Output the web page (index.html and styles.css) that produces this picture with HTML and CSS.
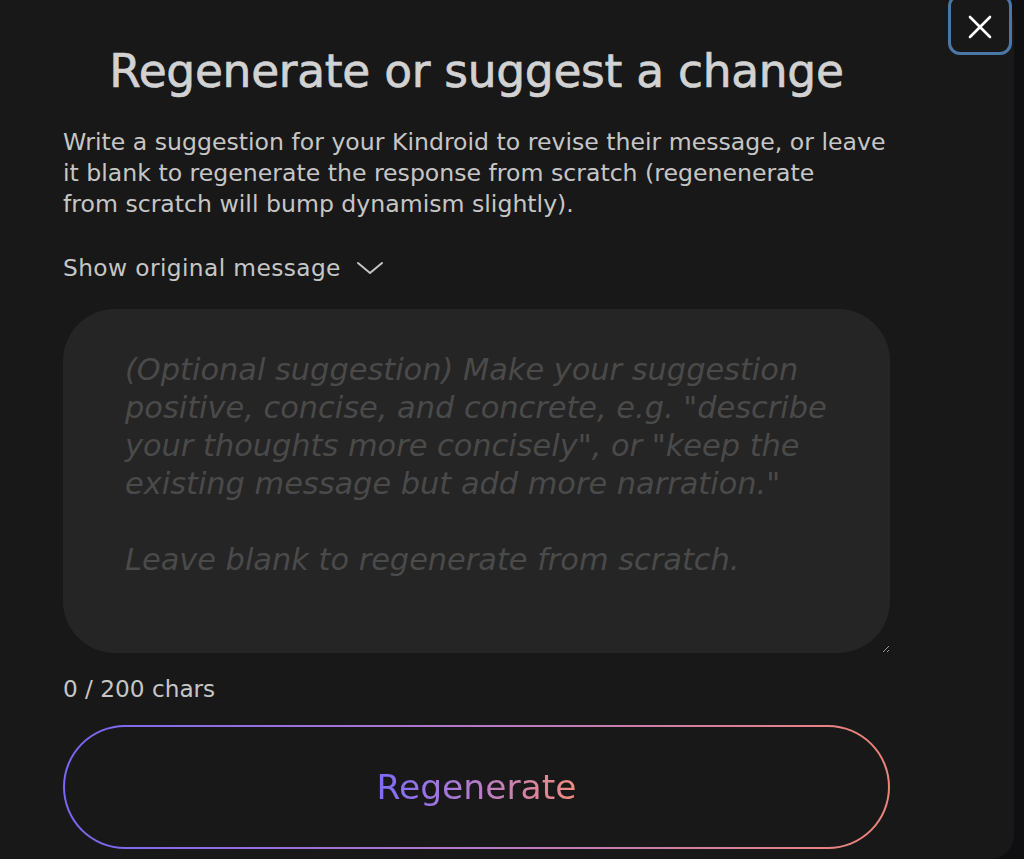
FILE: index.html
```html
<!DOCTYPE html>
<html lang="en">
<head>
    <meta charset="UTF-8">
    <meta name="viewport" content="width=device-width, initial-scale=1.0">
    <title>Regenerate</title>
    <link rel="stylesheet" href="styles.css">
</head>
<body>
    <div class="modal">
        <button class="close" aria-label="Close">
            <svg width="24" height="24" viewBox="0 0 24 24">
                <path d="M2 2 L22 22 M22 2 L2 22" stroke="#fff" stroke-width="2.6" stroke-linecap="round"/>
            </svg>
        </button>

        <div class="content">
            <h1 class="title">Regenerate or suggest a change</h1>
            <p class="desc">Write a suggestion for your Kindroid to revise their message, or leave it blank to regenerate the response from scratch (regenenerate<br>from scratch will bump dynamism slightly).</p>

            <div class="toggle">
                Show original message
                <svg width="28" height="16" viewBox="0 0 28 16">
                    <path d="M2 3 L14 13 L26 3" fill="none" stroke="#c4c4c4" stroke-width="2" stroke-linecap="round" stroke-linejoin="round"/>
                </svg>
            </div>

            <textarea class="suggestion" placeholder="(Optional suggestion) Make your suggestion positive, concise, and concrete, e.g. &quot;describe your thoughts more concisely&quot;, or &quot;keep the existing message but add more narration.&quot;&#10;&#10;Leave blank to regenerate from scratch."></textarea>

            <div class="count">0 / 200 chars</div>

            <button class="regen"><span>Regenerate</span></button>
        </div>
    </div>
</body>
</html>
```

FILE: styles.css
```css
body {
    margin: 0;
    height: 100vh;
    background-color: #0f0f11;
    font-family: "DejaVu Sans", sans-serif;
    overflow: hidden;
}

.modal {
    position: relative;
    height: 100%;
    margin-right: 10px;
    background-color: #181818;
    border-radius: 0 24px 24px 0;
}

.close {
    position: absolute;
    top: -6px;
    right: 2px;
    width: 64px;
    height: 61px;
    border: 3px solid #4b77a6;
    border-radius: 12px;
    background-color: #181818;
    display: flex;
    align-items: center;
    justify-content: center;
    padding: 0;
    padding-top: 5px;
    cursor: pointer;
}

.content {
    width: 827px;
    padding-left: 63px;
    padding-top: 44px;
}

.title {
    margin: 0;
    text-align: center;
    font-size: 45.5px;
    font-weight: 500;
    line-height: 56px;
    color: #d2d2d2;
    letter-spacing: -0.3px;
    -webkit-text-stroke: 0.7px #d2d2d2;
}

.desc {
    margin: 27px 0 0;
    font-size: 23.6px;
    line-height: 31px;
    color: #c6c6c6;
}

.toggle {
    display: flex;
    align-items: center;
    gap: 15px;
    margin-top: 32px;
    font-size: 23.3px;
    letter-spacing: 0.4px;
    line-height: 31px;
    color: #c6c6c6;
}

.suggestion {
    display: block;
    box-sizing: border-box;
    width: 100%;
    height: 344px;
    margin-top: 26px;
    padding: 42px 50px 20px 62px;
    border: none;
    border-radius: 52px;
    background-color: #252525;
    font-family: "DejaVu Sans", sans-serif;
    font-style: italic;
    font-size: 30.4px;
    line-height: 38px;
    color: #ddd;
    outline: none;
}

.suggestion::placeholder {
    color: #4a4a4a;
}

.count {
    margin-top: 20px;
    font-size: 23.2px;
    line-height: 31px;
    color: #c6c6c6;
}

.regen {
    display: flex;
    align-items: center;
    justify-content: center;
    box-sizing: border-box;
    width: 100%;
    height: 124px;
    margin-top: 21px;
    border: 2px solid transparent;
    border-radius: 62px;
    background: linear-gradient(#181818, #181818) padding-box,
                linear-gradient(90deg, #7866f4, #b679c8 50%, #ee8478) border-box;
    cursor: pointer;
}

.regen span {
    font-family: "DejaVu Sans", sans-serif;
    font-size: 34.5px;
    font-weight: 500;
    background: linear-gradient(90deg, #7d6cf8, #ab78d8 40%, #f08c80);
    -webkit-background-clip: text;
    background-clip: text;
    color: transparent;
}
```
